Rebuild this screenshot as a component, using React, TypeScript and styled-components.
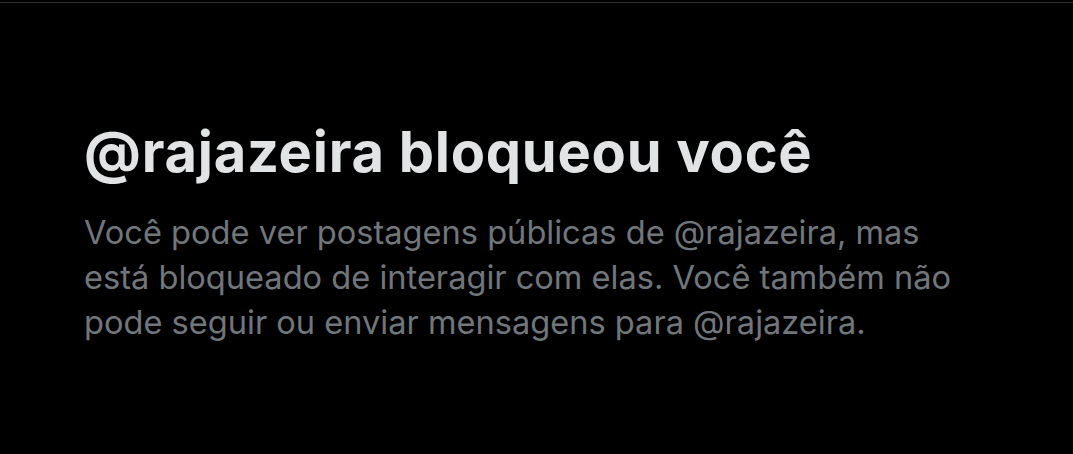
import React from 'react';
import styled, { createGlobalStyle } from 'styled-components';

const GlobalStyle = createGlobalStyle`
  html, body {
    margin: 0;
    padding: 0;
    background: #000000;
  }
  body {
    font-family: 'Inter', 'Liberation Sans', sans-serif;
  }
`;

const Page = styled.div`
  width: 1073px;
  height: 454px;
  background: #000000;
  display: flex;
  flex-direction: column;
  box-sizing: border-box;
  padding-top: 2px;
  overflow: hidden;
`;

const Divider = styled.div`
  height: 1px;
  background: #2f3336;
`;

const Notice = styled.section`
  display: flex;
  flex-direction: column;
  padding: 117px 0 0 84px;
`;

const Title = styled.h1`
  margin: 0;
  font-family: 'Inter', 'Liberation Sans', sans-serif;
  font-size: 56px;
  font-weight: 700;
  line-height: 64px;
  letter-spacing: 0.75px;
  color: #e1e3e4;
`;

const Body = styled.p`
  margin: 26px 0 0;
  max-width: 895px;
  font-family: 'Inter', 'Liberation Sans', sans-serif;
  font-size: 32.6px;
  font-weight: 400;
  line-height: 45px;
  color: #71767b;
`;

const App: React.FC = () => {
  const handle = '@rajazeira';

  return (
    <>
      <GlobalStyle />
      <Page>
        <Divider />
        <Notice>
          <Title>{handle} bloqueou você</Title>
          <Body>
            Você pode ver postagens públicas de {handle}, mas está bloqueado de interagir com
            elas. Você também não pode seguir ou enviar mensagens para {handle}.
          </Body>
        </Notice>
      </Page>
    </>
  );
};

export default App;
